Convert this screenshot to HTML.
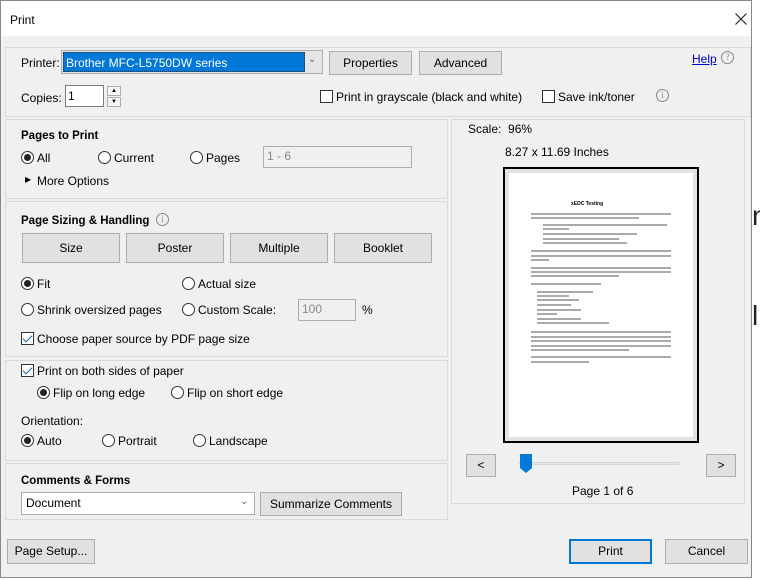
<!DOCTYPE html>
<html><head><meta charset="utf-8"><style>
*{box-sizing:border-box;margin:0;padding:0}
body{width:760px;height:581px;background:#fff;font-family:"Liberation Sans",sans-serif;font-size:12px;color:#000;position:relative;overflow:hidden}
.a{position:absolute;white-space:nowrap}
.dlg{position:absolute;left:0;top:0;width:752px;height:578px;background:#f0f0f0;border:1px solid #888}
.title{position:absolute;left:0;top:0;width:750px;height:35px;background:#fff}
.box{position:absolute;border:1px solid #dadada}
.btn{position:absolute;background:#e1e1e1;border:1px solid #adadad;text-align:center;line-height:22px}
.rad{position:absolute;width:13px;height:13px;border:1px solid #333;border-radius:50%;background:#fff}
.rad.on::after{content:"";position:absolute;left:2px;top:2px;width:7px;height:7px;border-radius:50%;background:#222}
.chk{position:absolute;width:13px;height:13px;border:1px solid #333;background:#fff}
.chk.on::after{content:"";position:absolute;left:3px;top:0px;width:4px;height:8px;border:solid #1a5fb4;border-width:0 1.5px 1.5px 0;transform:rotate(45deg)}
.inp{position:absolute;background:#fff;border:1px solid #7a7a7a}
.dis{position:absolute;background:#f0f0f0;border:1px solid #adadad;color:#888;padding-left:3px;line-height:18px}
b{font-weight:bold;font-size:11.5px}
.info{position:absolute;width:13px;height:13px;border:1px solid #888;border-radius:50%;color:#888;font-size:9px;text-align:center;line-height:11px;font-family:"Liberation Serif",serif}
</style></head><body>
<div class="a" style="left:752px;top:200px;font-size:28px;color:#222">n</div>
<div class="a" style="left:752px;top:300px;font-size:28px;color:#222">l</div>
<div class="dlg">
<div class="title"></div>
<div class="a" style="left:9px;top:12px">Print</div>
<svg class="a" style="left:734px;top:12px" width="12" height="12"><path d="M0.5 0.5L11.5 11.5M11.5 0.5L0.5 11.5" stroke="#222" stroke-width="1.2"/></svg>

<div class="box" style="left:4px;top:46px;width:746px;height:70px"></div>
<div class="a" style="left:20px;top:55px">Printer:</div>
<div class="inp" style="left:60px;top:49px;width:262px;height:24px;border-color:#adadad;background:#e5e5e5"></div>
<div class="a" style="left:62px;top:51px;width:242px;height:20px;background:#0078d7;color:#fff;padding:3px 2px;border:1px dotted #333">Brother MFC-L5750DW series</div>
<div class="a" style="left:307px;top:53px;color:#666;font-size:10px">&#8964;</div>
<div class="btn" style="left:328px;top:50px;width:83px;height:24px">Properties</div>
<div class="btn" style="left:418px;top:50px;width:83px;height:24px">Advanced</div>
<div class="a" style="left:691px;top:51px;color:#0000cc;text-decoration:underline">Help</div>
<div class="info" style="left:720px;top:50px">?</div>
<div class="a" style="left:20px;top:90px">Copies:</div>
<div class="inp" style="left:64px;top:84px;width:39px;height:22px;padding:3px 2px">1</div>
<div class="btn" style="left:106px;top:85px;width:14px;height:10px;line-height:8px;font-size:6px;background:#f5f5f5">▲</div>
<div class="btn" style="left:106px;top:96px;width:14px;height:10px;line-height:8px;font-size:6px;background:#f5f5f5">▼</div>
<div class="chk" style="left:319px;top:89px"></div>
<div class="a" style="left:335px;top:89px">Print in grayscale (black and white)</div>
<div class="chk" style="left:541px;top:89px"></div>
<div class="a" style="left:557px;top:89px">Save ink/toner</div>
<div class="info" style="left:655px;top:88px">i</div>

<div class="box" style="left:4px;top:118px;width:443px;height:80px"></div>
<div class="a" style="left:20px;top:127px"><b>Pages to Print</b></div>
<div class="rad on" style="left:20px;top:150px"></div><div class="a" style="left:36px;top:150px">All</div>
<div class="rad" style="left:97px;top:150px"></div><div class="a" style="left:113px;top:150px">Current</div>
<div class="rad" style="left:189px;top:150px"></div><div class="a" style="left:205px;top:150px">Pages</div>
<div class="dis" style="left:262px;top:145px;width:149px;height:22px">1 - 6</div>
<div class="a" style="left:24px;top:174px;font-size:8px">▶</div><div class="a" style="left:36px;top:173px">More Options</div>

<div class="box" style="left:4px;top:200px;width:443px;height:156px"></div>
<div class="a" style="left:20px;top:212px"><b>Page Sizing &amp; Handling</b></div>
<div class="info" style="left:155px;top:212px">i</div>
<div class="btn" style="left:21px;top:232px;width:98px;height:30px;line-height:28px">Size</div>
<div class="btn" style="left:125px;top:232px;width:98px;height:30px;line-height:28px">Poster</div>
<div class="btn" style="left:229px;top:232px;width:98px;height:30px;line-height:28px">Multiple</div>
<div class="btn" style="left:333px;top:232px;width:98px;height:30px;line-height:28px">Booklet</div>
<div class="rad on" style="left:20px;top:276px"></div><div class="a" style="left:36px;top:276px">Fit</div>
<div class="rad" style="left:181px;top:276px"></div><div class="a" style="left:197px;top:276px">Actual size</div>
<div class="rad" style="left:20px;top:302px"></div><div class="a" style="left:36px;top:302px">Shrink oversized pages</div>
<div class="rad" style="left:181px;top:302px"></div><div class="a" style="left:197px;top:302px">Custom Scale:</div>
<div class="dis" style="left:297px;top:298px;width:58px;height:22px">100</div>
<div class="a" style="left:361px;top:302px">%</div>
<div class="chk on" style="left:20px;top:331px"></div><div class="a" style="left:36px;top:331px">Choose paper source by PDF page size</div>

<div class="box" style="left:4px;top:359px;width:443px;height:101px"></div>
<div class="chk on" style="left:20px;top:363px"></div><div class="a" style="left:36px;top:363px">Print on both sides of paper</div>
<div class="rad on" style="left:36px;top:385px"></div><div class="a" style="left:52px;top:385px">Flip on long edge</div>
<div class="rad" style="left:170px;top:385px"></div><div class="a" style="left:186px;top:385px">Flip on short edge</div>
<div class="a" style="left:20px;top:413px">Orientation:</div>
<div class="rad on" style="left:20px;top:433px"></div><div class="a" style="left:36px;top:433px">Auto</div>
<div class="rad" style="left:101px;top:433px"></div><div class="a" style="left:117px;top:433px">Portrait</div>
<div class="rad" style="left:192px;top:433px"></div><div class="a" style="left:208px;top:433px">Landscape</div>

<div class="box" style="left:4px;top:462px;width:443px;height:57px"></div>
<div class="a" style="left:20px;top:472px"><b>Comments &amp; Forms</b></div>
<div class="inp" style="left:20px;top:491px;width:234px;height:23px;border-color:#adadad;padding:3px 4px">Document</div>
<div class="a" style="left:239px;top:495px;color:#666;font-size:10px">&#8964;</div>
<div class="btn" style="left:259px;top:491px;width:142px;height:24px">Summarize Comments</div>

<div class="box" style="left:450px;top:118px;width:294px;height:385px"></div>
<div class="a" style="left:467px;top:121px">Scale:&nbsp; 96%</div>
<div class="a" style="left:504px;top:144px">8.27 x 11.69 Inches</div>
<div class="a" style="left:502px;top:166px;width:196px;height:276px;border:2px solid #000;background:#e3e3e3">
 <div style="position:absolute;left:4px;top:4px;width:184px;height:264px;background:#fff">
  <div style="position:absolute;left:62px;top:28px;font-size:5px;font-weight:bold">xEDC Testing</div>
  <svg width="184" height="264" style="position:absolute;left:0;top:0"><g stroke="#777" stroke-width="1.3">
  <line x1="22" y1="41" x2="162" y2="41"/><line x1="22" y1="45" x2="130" y2="45"/>
  <line x1="34" y1="52" x2="158" y2="52"/><line x1="34" y1="56" x2="60" y2="56"/>
  <line x1="34" y1="61" x2="128" y2="61"/><line x1="34" y1="66" x2="110" y2="66"/><line x1="34" y1="70" x2="118" y2="70"/>
  <line x1="22" y1="78" x2="162" y2="78"/><line x1="22" y1="83" x2="162" y2="83"/><line x1="22" y1="87" x2="40" y2="87"/>
  <line x1="22" y1="95" x2="162" y2="95"/><line x1="22" y1="99" x2="162" y2="99"/><line x1="22" y1="103" x2="110" y2="103"/>
  <line x1="22" y1="111" x2="92" y2="111"/>
  <line x1="28" y1="119" x2="84" y2="119"/><line x1="28" y1="123" x2="60" y2="123"/><line x1="28" y1="127" x2="70" y2="127"/><line x1="28" y1="132" x2="62" y2="132"/><line x1="28" y1="137" x2="72" y2="137"/><line x1="28" y1="141" x2="48" y2="141"/><line x1="28" y1="146" x2="72" y2="146"/><line x1="28" y1="150" x2="100" y2="150"/>
  <line x1="22" y1="159" x2="162" y2="159"/><line x1="22" y1="164" x2="162" y2="164"/><line x1="22" y1="168" x2="162" y2="168"/><line x1="22" y1="173" x2="162" y2="173"/><line x1="22" y1="177" x2="120" y2="177"/>
  <line x1="22" y1="184" x2="162" y2="184"/><line x1="22" y1="189" x2="80" y2="189"/></g></svg>
 </div>
</div>
<div class="btn" style="left:465px;top:453px;width:30px;height:23px;line-height:21px">&lt;</div>
<div class="btn" style="left:705px;top:453px;width:30px;height:23px;line-height:21px">&gt;</div>
<div class="a" style="left:518px;top:461px;width:160px;height:3px;background:#e6e6e6;border:1px solid #d6d6d6"></div>
<svg class="a" style="left:519px;top:453px" width="13" height="20"><path d="M0 0H12V14L6 19L0 14Z" fill="#0078d7"/></svg>
<div class="a" style="left:571px;top:483px">Page 1 of 6</div>

<div class="btn" style="left:6px;top:538px;width:88px;height:25px">Page Setup...</div>
<div class="btn" style="left:568px;top:538px;width:83px;height:25px;border:2px solid #0078d7;line-height:21px">Print</div>
<div class="btn" style="left:664px;top:538px;width:83px;height:25px">Cancel</div>
</div>
</body></html>
